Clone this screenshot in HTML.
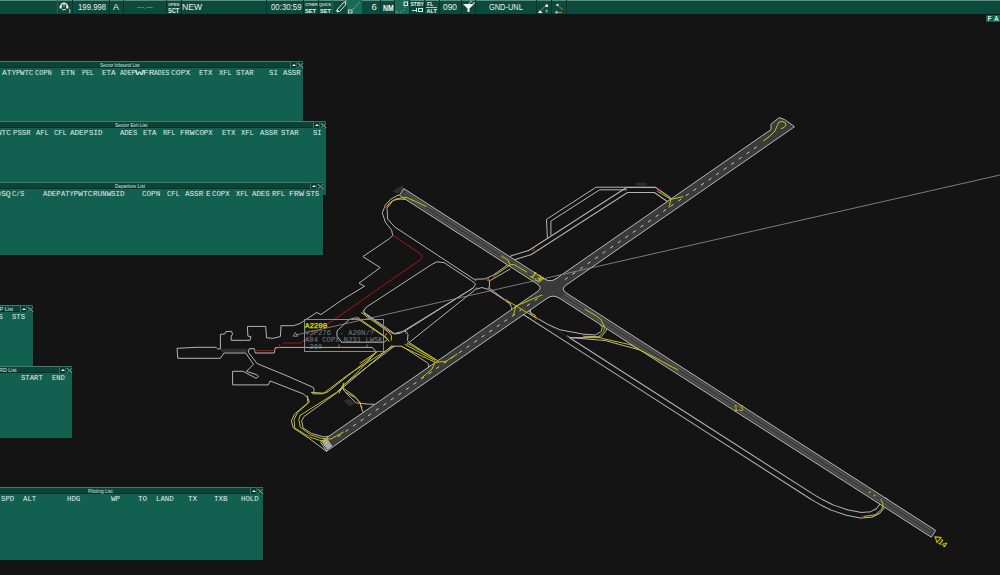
<!DOCTYPE html>
<html><head><meta charset="utf-8">
<style>
*{margin:0;padding:0;box-sizing:border-box}
html,body{width:1000px;height:575px;overflow:hidden;background:#141414;font-family:"Liberation Sans",sans-serif}
#top{position:absolute;left:0;top:0;width:1000px;height:14px;background:#0c4a3b;border-top:1px solid #628a7e;z-index:10}
.sep{position:absolute;top:-1px;width:1px;height:14px;background:#07342a}
.tb{position:absolute;color:#e8f0ee;font-size:10px;line-height:10px;white-space:pre}
.pan{position:absolute;background:#12604f}
.ttl{position:absolute;left:0;top:0;right:0;height:7px;background:#0a4437;border-top:1px solid #4a7a6d;border-bottom:1px solid #062e24}
.ttx{position:absolute;top:1px;font-size:5.5px;line-height:6px;color:#d8e4e0;white-space:pre}
.bup{position:absolute;top:0;width:6px;height:7px;border-left:1px solid #3d6e60;border-top:1px solid #3d6e60;background:#063b2d}
.bup:after{content:"";position:absolute;left:0.6px;top:1.5px;border-left:2.6px solid transparent;border-right:2.6px solid transparent;border-bottom:2.8px solid #f4f4f4}
.bx{position:absolute;top:0;width:7px;height:7px;border-left:1px solid #2e5e50;border-top:1px solid #3d6e60;background:#063b2d}
.bx:before,.bx:after{content:"";position:absolute;left:-0.5px;top:2.5px;width:7px;height:1px;background:#80a89c;transform:rotate(42deg)}
.bx:after{transform:rotate(-42deg);background:#5e8a7e}
.h{position:absolute;font-family:"Liberation Mono",monospace;font-size:7px;line-height:7px;color:#e4ece8;white-space:pre;transform-origin:0 0}
#map{position:absolute;left:0;top:0}
.lbl{font-family:"Liberation Mono",monospace;font-size:7px}
</style></head><body>
<svg id="map" width="1000" height="575" viewBox="0 0 1000 575">
<path d="M392.4,191 L401.8,185.5 L404.2,188.6 L397.1,194.1Z" fill="#2e2e2e"/>
<rect x="221.3" y="348.7" width="26.1" height="3.5" fill="#2e2e2e"/>
<path d="M636,182.8 L646.5,182.8 L646.5,185.6 L636,185.6Z" fill="#2e2e2e"/>
<path d="M343.4,400.7 L349,398.8 L355.2,403.5 L349.7,406.3Z" fill="#2e2e2e"/>
<path d="M398.7,194.9 L391.0,199.0 L385.4,205.0 L382.3,212.9 L385.4,222.3 L391.6,230.1 L392.7,235.5 L389.5,238.6 L362.9,256.6 L380.2,267.6 L359.0,283.2 L364.5,286.3 L341.8,300.0 L320.9,314.6 L316.7,312.5 L300.0,323.5 L293.5,325.7 L281.0,325.7 L280.4,336.5 L273.5,338.3 L266.5,337.9 L265.7,326.4 L247.4,326.4 L247.9,336.2 L250.9,336.5 L250.0,340.3 L231.2,340.3 L231.2,335.7 L232.6,334.8 L231.7,331.3 L225.7,331.7 L224.8,333.9 L220.4,334.4 L220.4,349.0 L217.8,349.0 L216.1,347.3 L197.0,347.3 L177.0,348.3 L177.8,358.3 L220.4,358.3 L223.9,353.0 L245.7,353.0 L253.5,364.3 L246.5,371.3 L257.0,374.8 L258.7,376.5 L256.1,378.3 L243.0,371.3 L232.6,371.3 L232.6,384.9 L268.3,384.9 L270.0,380.9 L303.1,393.8 L307.3,397.3 L308.0,402.8 L294.7,413.9 L291.3,420.9 L293.3,427.9 L310.0,439.0 L326.7,451.5" fill="none" stroke="#b4b4b4" stroke-width="1.0" stroke-linejoin="round" stroke-linecap="round" />
<path d="M249.1,349.0 L248.3,352.2 L257.0,363.5 L285.0,375.0 L313.5,387.5 L314.2,390.3 L312.8,393.8 L322.6,393.8 L328.1,391.7 L373.5,355.2 L376.1,351.8 L372.4,347.4 L282.0,347.4 L275.2,347.8 L274.3,353.0 L255.2,353.0 L254.3,348.7 L249.5,348.8" fill="none" stroke="#b4b4b4" stroke-width="1.0" stroke-linejoin="round" stroke-linecap="round" />
<path d="M254.5,350.6 L274.0,350.6" fill="none" stroke="#b01010" stroke-width="1.0" stroke-linejoin="round" stroke-linecap="round" />
<path d="M279.6,344.3 L279.6,347.3" fill="none" stroke="#b01010" stroke-width="1.0" stroke-linejoin="round" stroke-linecap="round" />
<path d="M283.9,343 L300.3,343 L419.2,260.6 Q423.5,257.5 421.5,254.5 L393.2,235.6" fill="none" stroke="#b01010" stroke-width="1.0" stroke-linejoin="round" stroke-linecap="round" />
<path d="M407.3,199.6 L400.0,199.0 L393.2,200.3 L387.0,208.2 L387.7,219.1 L394.8,227.0 L474.1,279.3 L485.0,278.9 L492.9,275.3 L507.0,265.2" fill="none" stroke="#b4b4b4" stroke-width="1.0" stroke-linejoin="round" stroke-linecap="round" />
<path d="M363.9,310.5 L366.5,307.0 L431.8,264.4 L437.0,261.8 L444.0,262.6 L471.7,280.8 L475.6,284.0 L473.3,287.9 L405.7,329.6 L400.5,333.1 L395.2,334.0 L391.8,333.1 L363.9,313.1 L363.9,310.5" fill="none" stroke="#b4b4b4" stroke-width="1.0" stroke-linejoin="round" stroke-linecap="round" />
<path d="M341.8,342.2 L384.0,342.2 L387.4,339.6 L384.8,337.0 L361.3,321.3 L355.3,317.8 L349.2,319.6 L337.0,330.9 L337.0,336.1 L341.8,342.2" fill="none" stroke="#b4b4b4" stroke-width="1.0" stroke-linejoin="round" stroke-linecap="round" />
<path d="M363.1,311.7 L394.4,333.5 L404.9,331.0 L408.0,334.2 L407.5,340.4 L409.1,342.5 L435.2,359.2" fill="none" stroke="#b4b4b4" stroke-width="1.0" stroke-linejoin="round" stroke-linecap="round" />
<path d="M404.9,331.0 L473.3,287.9" fill="none" stroke="#b4b4b4" stroke-width="1.0" stroke-linejoin="round" stroke-linecap="round" />
<path d="M409.1,342.5 L475.6,289.4 L481.9,287.5 L488.2,289.4 L504.4,299.9 L509.5,303.5 L511.8,307.5 L511.0,311.5 L509.0,315.0" fill="none" stroke="#b4b4b4" stroke-width="1.0" stroke-linejoin="round" stroke-linecap="round" />
<path d="M489.0,280.0 L489.7,284.0 L489.0,287.9 L510.9,304.4" fill="none" stroke="#b4b4b4" stroke-width="1.0" stroke-linejoin="round" stroke-linecap="round" />
<path d="M489.7,280.8 L510.0,269.1" fill="none" stroke="#b4b4b4" stroke-width="1.0" stroke-linejoin="round" stroke-linecap="round" />
<path d="M391.3,346.2 L401.8,346.2 L405.9,348.8 L426.8,362.4 L428.9,364.4 L428.4,367.6" fill="none" stroke="#b4b4b4" stroke-width="1.0" stroke-linejoin="round" stroke-linecap="round" />
<path d="M391.3,346.2 L336.5,393.1 L303.8,416.7 L301.7,420.9 L303.1,427.9 L311.4,433.4 L323.9,436.9 L329.5,436.2" fill="none" stroke="#b4b4b4" stroke-width="1.0" stroke-linejoin="round" stroke-linecap="round" />
<path d="M339.2,393.1 L343.4,384.7 L342.7,388.2 L344.8,391.7 L355.9,398.0 L360.1,402.8 L361.5,408.4 L362.9,411.9" fill="none" stroke="#b4b4b4" stroke-width="1.0" stroke-linejoin="round" stroke-linecap="round" />
<path d="M342.0,386.0 L394.4,346.2" fill="none" stroke="#b4b4b4" stroke-width="1.0" stroke-linejoin="round" stroke-linecap="round" />
<path d="M346.2,393.1 L355.9,402.8 L368.5,404.2 L374.0,404.2" fill="none" stroke="#b4b4b4" stroke-width="1.0" stroke-linejoin="round" stroke-linecap="round" />
<path d="M570.0,337.6 L605.0,340.5 L640.0,350.0 L700.0,384.0" fill="none" stroke="#b4b4b4" stroke-width="1.0" stroke-linejoin="round" stroke-linecap="round" />
<path d="M522.0,310.4 L560.0,334.8 L700.0,424.8 L812.0,496.7 L822.0,502.5 L832.0,507.5 L848.0,512.8 L861.0,515.2 L871.0,514.6 L878.0,511.0 L882.0,506.0 L884.5,500.5" fill="none" stroke="#b4b4b4" stroke-width="6.5" stroke-linejoin="round" stroke-linecap="round" />
<path d="M512.0,258.0 L530.0,252.5 L627.0,190.0 L655.0,190.0 L668.0,199.0" fill="none" stroke="#b4b4b4" stroke-width="5.8" stroke-linejoin="round" stroke-linecap="round" />
<path d="M522.0,310.4 L560.0,334.8 L700.0,424.8 L812.0,496.7 L822.0,502.5 L832.0,507.5 L848.0,512.8 L861.0,515.2 L871.0,514.6 L878.0,511.0 L882.0,506.0 L884.5,500.5" fill="none" stroke="#141414" stroke-width="4.5" stroke-linejoin="round" stroke-linecap="round" />
<path d="M512.0,258.0 L530.0,252.5 L627.0,190.0 L655.0,190.0 L668.0,199.0" fill="none" stroke="#141414" stroke-width="3.8" stroke-linejoin="round" stroke-linecap="round" />
<path d="M537.0,316.1 L569.0,336.7" fill="none" stroke="#141414" stroke-width="2.4" stroke-linejoin="round" stroke-linecap="round" />
<path d="M547.4,237.6 L546.5,219.3 L596.1,187.2 L655.2,187.2" fill="none" stroke="#b4b4b4" stroke-width="1.0" stroke-linejoin="round" stroke-linecap="round" />
<path d="M550.9,235.0 L550.9,221.1 L599.6,189.8 L626.5,189.8" fill="none" stroke="#b4b4b4" stroke-width="1.0" stroke-linejoin="round" stroke-linecap="round" />
<path d="M536.5,317.9 L548.0,324.5 L560.0,329.8 L583.0,334.1 L595.2,335.0 L601.3,331.5 L602.2,327.2 L600.4,324.6" fill="none" stroke="#b4b4b4" stroke-width="1.0" stroke-linejoin="round" stroke-linecap="round" />
<path d="M567.4,335.9 L570.0,337.6 L600.4,337.6 L605.7,331.5 L606.5,328.9 L607.4,328.0" fill="none" stroke="#b4b4b4" stroke-width="1.0" stroke-linejoin="round" stroke-linecap="round" />
<path d="M399.4,195.4 L931.3,537.2 L935.7,530.4 L403.8,188.6Z" fill="#3e3e3e" stroke="#b8b8b8" stroke-width="1"/>
<path d="M403.7,195.4 L929.6,533.2" fill="none" stroke="#606060" stroke-width="0.9" stroke-linejoin="round" stroke-linecap="round" />
<path d="M405.5,192.6 L931.4,530.4" fill="none" stroke="#606060" stroke-width="0.9" stroke-linejoin="round" stroke-linecap="round" />
<path d="M326.7,451.1 L794.5,126.7 L784.5,119.5 L779.2,117.6 L771,124.2 L771,129.6 L320.5,442.1Z" fill="#3a3a3a" stroke="#b8b8b8" stroke-width="1"/>
<line x1="337.9" y1="436.7" x2="340.8" y2="434.7" stroke="#c8c8c8" stroke-width="1"/>
<line x1="345.5" y1="431.5" x2="348.3" y2="429.5" stroke="#c8c8c8" stroke-width="1"/>
<line x1="353.0" y1="426.2" x2="355.9" y2="424.2" stroke="#c8c8c8" stroke-width="1"/>
<line x1="360.6" y1="421.0" x2="363.5" y2="419.0" stroke="#c8c8c8" stroke-width="1"/>
<line x1="368.2" y1="415.7" x2="371.0" y2="413.8" stroke="#c8c8c8" stroke-width="1"/>
<line x1="375.7" y1="410.5" x2="378.6" y2="408.5" stroke="#c8c8c8" stroke-width="1"/>
<line x1="383.3" y1="405.3" x2="386.2" y2="403.3" stroke="#c8c8c8" stroke-width="1"/>
<line x1="390.9" y1="400.0" x2="393.7" y2="398.0" stroke="#c8c8c8" stroke-width="1"/>
<line x1="398.4" y1="394.8" x2="401.3" y2="392.8" stroke="#c8c8c8" stroke-width="1"/>
<line x1="406.0" y1="389.6" x2="408.9" y2="387.6" stroke="#c8c8c8" stroke-width="1"/>
<line x1="413.5" y1="384.3" x2="416.4" y2="382.3" stroke="#c8c8c8" stroke-width="1"/>
<line x1="421.1" y1="379.1" x2="424.0" y2="377.1" stroke="#c8c8c8" stroke-width="1"/>
<line x1="428.7" y1="373.9" x2="431.6" y2="371.9" stroke="#c8c8c8" stroke-width="1"/>
<line x1="436.2" y1="368.6" x2="439.1" y2="366.6" stroke="#c8c8c8" stroke-width="1"/>
<line x1="443.8" y1="363.4" x2="446.7" y2="361.4" stroke="#c8c8c8" stroke-width="1"/>
<line x1="451.4" y1="358.1" x2="454.2" y2="356.2" stroke="#c8c8c8" stroke-width="1"/>
<line x1="458.9" y1="352.9" x2="461.8" y2="350.9" stroke="#c8c8c8" stroke-width="1"/>
<line x1="466.5" y1="347.7" x2="469.4" y2="345.7" stroke="#c8c8c8" stroke-width="1"/>
<line x1="474.1" y1="342.4" x2="476.9" y2="340.4" stroke="#c8c8c8" stroke-width="1"/>
<line x1="481.6" y1="337.2" x2="484.5" y2="335.2" stroke="#c8c8c8" stroke-width="1"/>
<line x1="489.2" y1="332.0" x2="492.1" y2="330.0" stroke="#c8c8c8" stroke-width="1"/>
<line x1="496.8" y1="326.7" x2="499.6" y2="324.7" stroke="#c8c8c8" stroke-width="1"/>
<line x1="504.3" y1="321.5" x2="507.2" y2="319.5" stroke="#c8c8c8" stroke-width="1"/>
<line x1="511.9" y1="316.3" x2="514.8" y2="314.3" stroke="#c8c8c8" stroke-width="1"/>
<line x1="519.4" y1="311.0" x2="522.3" y2="309.0" stroke="#c8c8c8" stroke-width="1"/>
<line x1="527.0" y1="305.8" x2="529.9" y2="303.8" stroke="#c8c8c8" stroke-width="1"/>
<line x1="534.6" y1="300.5" x2="537.5" y2="298.6" stroke="#c8c8c8" stroke-width="1"/>
<line x1="542.1" y1="295.3" x2="545.0" y2="293.3" stroke="#c8c8c8" stroke-width="1"/>
<line x1="549.7" y1="290.1" x2="552.6" y2="288.1" stroke="#c8c8c8" stroke-width="1"/>
<line x1="557.3" y1="284.8" x2="560.1" y2="282.8" stroke="#c8c8c8" stroke-width="1"/>
<line x1="564.8" y1="279.6" x2="567.7" y2="277.6" stroke="#c8c8c8" stroke-width="1"/>
<line x1="572.4" y1="274.4" x2="575.3" y2="272.4" stroke="#c8c8c8" stroke-width="1"/>
<line x1="580.0" y1="269.1" x2="582.8" y2="267.1" stroke="#c8c8c8" stroke-width="1"/>
<line x1="587.5" y1="263.9" x2="590.4" y2="261.9" stroke="#c8c8c8" stroke-width="1"/>
<line x1="595.1" y1="258.7" x2="598.0" y2="256.7" stroke="#c8c8c8" stroke-width="1"/>
<line x1="602.7" y1="253.4" x2="605.5" y2="251.4" stroke="#c8c8c8" stroke-width="1"/>
<line x1="610.2" y1="248.2" x2="613.1" y2="246.2" stroke="#c8c8c8" stroke-width="1"/>
<line x1="617.8" y1="242.9" x2="620.7" y2="240.9" stroke="#c8c8c8" stroke-width="1"/>
<line x1="625.3" y1="237.7" x2="628.2" y2="235.7" stroke="#c8c8c8" stroke-width="1"/>
<line x1="632.9" y1="232.5" x2="635.8" y2="230.5" stroke="#c8c8c8" stroke-width="1"/>
<line x1="640.5" y1="227.2" x2="643.4" y2="225.2" stroke="#c8c8c8" stroke-width="1"/>
<line x1="648.0" y1="222.0" x2="650.9" y2="220.0" stroke="#c8c8c8" stroke-width="1"/>
<line x1="655.6" y1="216.8" x2="658.5" y2="214.8" stroke="#c8c8c8" stroke-width="1"/>
<line x1="663.2" y1="211.5" x2="666.0" y2="209.5" stroke="#c8c8c8" stroke-width="1"/>
<line x1="670.7" y1="206.3" x2="673.6" y2="204.3" stroke="#c8c8c8" stroke-width="1"/>
<line x1="678.3" y1="201.0" x2="681.2" y2="199.1" stroke="#c8c8c8" stroke-width="1"/>
<line x1="685.9" y1="195.8" x2="688.7" y2="193.8" stroke="#c8c8c8" stroke-width="1"/>
<line x1="693.4" y1="190.6" x2="696.3" y2="188.6" stroke="#c8c8c8" stroke-width="1"/>
<line x1="701.0" y1="185.3" x2="703.9" y2="183.3" stroke="#c8c8c8" stroke-width="1"/>
<line x1="708.6" y1="180.1" x2="711.4" y2="178.1" stroke="#c8c8c8" stroke-width="1"/>
<line x1="716.1" y1="174.9" x2="719.0" y2="172.9" stroke="#c8c8c8" stroke-width="1"/>
<line x1="723.7" y1="169.6" x2="726.6" y2="167.6" stroke="#c8c8c8" stroke-width="1"/>
<line x1="731.2" y1="164.4" x2="734.1" y2="162.4" stroke="#c8c8c8" stroke-width="1"/>
<line x1="738.8" y1="159.2" x2="741.7" y2="157.2" stroke="#c8c8c8" stroke-width="1"/>
<line x1="746.4" y1="153.9" x2="749.3" y2="151.9" stroke="#c8c8c8" stroke-width="1"/>
<line x1="753.9" y1="148.7" x2="756.8" y2="146.7" stroke="#c8c8c8" stroke-width="1"/>
<path d="M322.0,442.1 L327.1,438.5 L332.4,446.1 L327.2,449.7Z" fill="#b8b8b8"/>
<line x1="323.3" y1="444.0" x2="328.5" y2="440.4" stroke="#7a7a7a" stroke-width="0.7"/>
<line x1="324.6" y1="445.9" x2="329.8" y2="442.3" stroke="#7a7a7a" stroke-width="0.7"/>
<line x1="325.9" y1="447.8" x2="331.1" y2="444.2" stroke="#7a7a7a" stroke-width="0.7"/>
<path d="M530.4,309.5 Q529.6,315.6 536.5,317.9" fill="none" stroke="#b4b4b4" stroke-width="1"/>
<path d="M386.2,207.4 L390.0,202.5 L396.0,199.0 L405.7,197.2 L415.1,201.1 L426.1,206.6" fill="none" stroke="#c8c400" stroke-width="1.0" stroke-linejoin="round" stroke-linecap="round" />
<path d="M361.3,312.6 L389.2,332.6 L391.5,336.0 L391.2,340.4" fill="none" stroke="#c8c400" stroke-width="1.0" stroke-linejoin="round" stroke-linecap="round" />
<path d="M357.0,317.0 L386.5,337.5 L389.0,341.5" fill="none" stroke="#c8c400" stroke-width="1.0" stroke-linejoin="round" stroke-linecap="round" />
<path d="M311.4,392.4 L323.9,393.1 L347.6,375.0 L392.4,346.7" fill="none" stroke="#c8c400" stroke-width="1.0" stroke-linejoin="round" stroke-linecap="round" />
<path d="M300.3,415.3 L336.5,392.4 L360.0,369.7 L376.7,351.9" fill="none" stroke="#c8c400" stroke-width="1.0" stroke-linejoin="round" stroke-linecap="round" />
<path d="M360.0,363.4 L376.7,351.9" fill="none" stroke="#c8c400" stroke-width="1.0" stroke-linejoin="round" stroke-linecap="round" />
<path d="M307.3,395.9 L309.3,402.1 L297.5,412.6 L294.0,419.5 L294.7,427.9 L309.3,436.9 L319.8,440.4 L326.7,441.1" fill="none" stroke="#c8c400" stroke-width="1.0" stroke-linejoin="round" stroke-linecap="round" />
<path d="M300.3,415.3 L298.9,419.5 L300.3,427.2 L310.7,434.8 L321.2,438.3 L330.9,439.0 L343.4,432.0" fill="none" stroke="#c8c400" stroke-width="1.0" stroke-linejoin="round" stroke-linecap="round" />
<path d="M343.4,383.3 L343.0,388.0 L355.0,396.5 L359.5,402.0 L362.0,408.0" fill="none" stroke="#c8c400" stroke-width="1.0" stroke-linejoin="round" stroke-linecap="round" />
<path d="M401.8,346.7 L433.1,361.3" fill="none" stroke="#c8c400" stroke-width="1.0" stroke-linejoin="round" stroke-linecap="round" />
<path d="M405.0,344.5 L435.0,360.5" fill="none" stroke="#c8c400" stroke-width="1.0" stroke-linejoin="round" stroke-linecap="round" />
<path d="M407.0,343.0 L437.2,360.3" fill="none" stroke="#c8c400" stroke-width="1.0" stroke-linejoin="round" stroke-linecap="round" />
<path d="M433.1,361.3 L435.2,362.4 L432.0,369.0 L421.6,378.0" fill="none" stroke="#c8c400" stroke-width="1.0" stroke-linejoin="round" stroke-linecap="round" />
<path d="M435.2,362.4 L446.0,361.3 L457.1,354.0" fill="none" stroke="#c8c400" stroke-width="1.0" stroke-linejoin="round" stroke-linecap="round" />
<path d="M494.0,275.9 L510.2,264.9" fill="none" stroke="#c8c400" stroke-width="1.0" stroke-linejoin="round" stroke-linecap="round" />
<path d="M501.3,256.0 L508.0,260.0 L510.2,264.9 L513.8,264.4 L526.9,272.2" fill="none" stroke="#c8c400" stroke-width="1.0" stroke-linejoin="round" stroke-linecap="round" />
<path d="M505.6,299.7 L516.1,306.0 L536.9,318.5" fill="none" stroke="#c8c400" stroke-width="1.0" stroke-linejoin="round" stroke-linecap="round" />
<path d="M516.1,306.0 L514.5,311.0 L513.5,315.0" fill="none" stroke="#c8c400" stroke-width="1.0" stroke-linejoin="round" stroke-linecap="round" />
<path d="M515.0,306.5 L544.2,294.0" fill="none" stroke="#c8c400" stroke-width="1.0" stroke-linejoin="round" stroke-linecap="round" />
<path d="M584.8,309.3 L597.0,316.5 L601.3,320.2 L604.3,326.3 L603.9,331.5 L598.7,336.7 L583.9,336.3" fill="none" stroke="#c8c400" stroke-width="1.0" stroke-linejoin="round" stroke-linecap="round" />
<path d="M598.7,336.7 L602.2,338.5 L630.0,344.6 L677.8,369.8" fill="none" stroke="#c8c400" stroke-width="1.0" stroke-linejoin="round" stroke-linecap="round" />
<path d="M657.8,191.5 L670.9,199.3 L683.0,196.7" fill="none" stroke="#c8c400" stroke-width="1.0" stroke-linejoin="round" stroke-linecap="round" />
<path d="M670.9,199.3 L669.1,207.2" fill="none" stroke="#c8c400" stroke-width="1.0" stroke-linejoin="round" stroke-linecap="round" />
<path d="M880.8,499.6 L883.2,503.6 L881.6,509.2 L875.2,514.8 L864.0,516.4" fill="none" stroke="#c8c400" stroke-width="1.0" stroke-linejoin="round" stroke-linecap="round" />
<path d="M869.3,492.2 L869.9,492.6" fill="none" stroke="#c8c400" stroke-width="1.3" stroke-linejoin="round" stroke-linecap="round" />
<path d="M874.1,495.4 L874.7,495.8" fill="none" stroke="#c8c400" stroke-width="1.3" stroke-linejoin="round" stroke-linecap="round" />
<path d="M763.5,140.8 L770.0,136.0 L775.0,131.0 L777.0,126.0 L779.0,122.0 L782.0,121.5 L785.0,122.5 L786.0,125.0 L784.0,127.5 L781.5,128.5" fill="none" stroke="#c8c400" stroke-width="1.0" stroke-linejoin="round" stroke-linecap="round" />
<line x1="474.8" y1="280.9" x2="477.2" y2="279.1" stroke="#c05818" stroke-width="1.2"/>
<line x1="474.8" y1="289.4" x2="477.2" y2="287.6" stroke="#c05818" stroke-width="1.2"/>
<line x1="486.8" y1="280.4" x2="489.2" y2="278.6" stroke="#c05818" stroke-width="1.2"/>
<line x1="486.8" y1="289.4" x2="489.2" y2="287.6" stroke="#c05818" stroke-width="1.2"/>
<line x1="422.5" y1="357.5" x2="424.9" y2="355.7" stroke="#c05818" stroke-width="1.2"/>
<line x1="405.8" y1="346.0" x2="408.2" y2="344.2" stroke="#c05818" stroke-width="1.2"/>
<line x1="405.1" y1="333.6" x2="407.5" y2="331.8" stroke="#c05818" stroke-width="1.2"/>
<line x1="384.8" y1="335.4" x2="387.2" y2="333.6" stroke="#c05818" stroke-width="1.2"/>
<line x1="392.5" y1="236.0" x2="394.5" y2="236.0" stroke="#b01010" stroke-width="1.2"/>
<line x1="492.8" y1="277.3" x2="495.2" y2="275.5" stroke="#c02818" stroke-width="1.2"/>
<line x1="504.8" y1="300.9" x2="507.2" y2="299.1" stroke="#c02818" stroke-width="1.2"/>
<line x1="535.2" y1="319.9" x2="537.6" y2="318.1" stroke="#c02818" stroke-width="1.2"/>
<line x1="308.1" y1="437.1" x2="310.5" y2="435.3" stroke="#c02818" stroke-width="1.2"/>
<line x1="356.1" y1="403.0" x2="358.5" y2="401.2" stroke="#c02818" stroke-width="1.2"/>
<line x1="656.6" y1="191.6" x2="659.0" y2="189.8" stroke="#c02818" stroke-width="1.2"/>
<line x1="532.3" y1="250.7" x2="534.7" y2="248.9" stroke="#c02818" stroke-width="1.2"/>
<line x1="339.0" y1="344.4" x2="339.0" y2="346.9" stroke="#c05818" stroke-width="1.2"/>
<line x1="367.0" y1="344.4" x2="367.0" y2="346.9" stroke="#c05818" stroke-width="1.2"/>
<line x1="384.9" y1="206.4" x2="387.1" y2="207.6" stroke="#b01010" stroke-width="1.2"/>
<line x1="862.2" y1="515.1" x2="862.6" y2="517.3" stroke="#b01010" stroke-width="1.2"/>
<line x1="583.3" y1="334.7" x2="583.7" y2="336.9" stroke="#c02818" stroke-width="1.2"/>
<path d="M297.0,334.7 L1000.0,175.0" fill="none" stroke="#949494" stroke-width="0.8" stroke-linejoin="round" stroke-linecap="round" />
<rect x="304.5" y="319.5" width="79" height="32" fill="none" stroke="#8a8a8a" stroke-width="1"/>
<path d="M293.2,336.2 L295.4,332.6 L297.6,336.2Z" fill="none" stroke="#a8a8a8" stroke-width="0.8"/>
<text x="305" y="327.8" font-family="Liberation Mono" font-size="7.4" fill="#e0e000" stroke="#e0e000" stroke-width="0.25">A2200</text>
<text x="305" y="334.5" font-family="Liberation Mono" font-size="7.2" fill="#6e7e8c" xml:space="preserve">VJP276  - A20N/?</text>
<text x="305" y="341.9" font-family="Liberation Mono" font-size="7.2" fill="#6e7e8c" xml:space="preserve">A04 COPX N231 LWSK</text>
<text x="305" y="348.8" font-family="Liberation Mono" font-size="7.2" fill="#6e7e8c" xml:space="preserve"> 360</text>
<text x="733.5" y="411" font-family="Liberation Sans" font-size="8.2" letter-spacing="0.8" fill="#c8c000">13</text>
<g transform="translate(539.6,279) rotate(36)"><text x="-10" y="3.6" font-family="Liberation Sans" font-size="10" fill="#d4d000">13</text><path d="M1.8,-3.2 L8.5,0.2 L1.8,3.4Z" fill="none" stroke="#d4d000" stroke-width="1.1"/></g>
<g transform="translate(941,541.5) rotate(38)"><path d="M-7.5,0 L-2.5,-3.2 L-2.5,3.2Z" fill="none" stroke="#c8c400" stroke-width="1.1"/><text x="-2" y="3" font-family="Liberation Sans" font-size="8" font-weight="bold" fill="#c8c400">14</text></g>
<path d="M558.93,297.97 Q553.04,294.19 547.29,298.18 L537.27,291.74 Q543.02,287.75 537.13,283.97 L544.42,278.91 Q550.31,282.69 556.07,278.70 L566.09,285.14 Q560.33,289.13 566.22,292.91Z" fill="#3a3a3a" stroke="none"/>
<path d="M558.93,297.97 Q553.04,294.19 547.29,298.18" fill="none" stroke="#b8b8b8" stroke-width="1"/>
<path d="M537.13,283.97 Q543.02,287.75 537.27,291.74" fill="none" stroke="#b8b8b8" stroke-width="1"/>
<path d="M544.42,278.91 Q550.31,282.69 556.07,278.70" fill="none" stroke="#b8b8b8" stroke-width="1"/>
<path d="M566.22,292.91 Q560.33,289.13 566.09,285.14" fill="none" stroke="#b8b8b8" stroke-width="1"/>
</svg>
<div class="pan" style="left:0px;top:121px;width:326px;height:74px;z-index:2"><div class="ttl"></div><div class="ttx" style="left:115.10px;transform:scaleX(0.883);transform-origin:0 0">Sector Exit List</div><div class="bup" style="left:313px"></div><div class="bx" style="left:319px"></div><div class="h" style="left:-3.40px;top:8.5px;transform:scale(1.094,1.08)">WTC</div><div class="h" style="left:13.40px;top:8.5px;transform:scale(1.047,1.08)">PSSR</div><div class="h" style="left:35.60px;top:8.5px;transform:scale(1.015,1.08)">AFL</div><div class="h" style="left:54.20px;top:8.5px;transform:scale(1.015,1.08)">CFL</div><div class="h" style="left:70.40px;top:8.5px;transform:scale(1.083,1.08)">ADEP</div><div class="h" style="left:89.00px;top:8.5px;transform:scale(1.063,1.08)">SID</div><div class="h" style="left:120.20px;top:8.5px;transform:scale(1.023,1.08)">ADES</div><div class="h" style="left:142.60px;top:8.5px;transform:scale(1.063,1.08)">ETA</div><div class="h" style="left:163.00px;top:8.5px;transform:scale(0.968,1.08)">RFL</div><div class="h" style="left:179.80px;top:8.5px;transform:scale(1.158,1.08)">FRW</div><div class="h" style="left:194.80px;top:8.5px;transform:scale(1.047,1.08)">COPX</div><div class="h" style="left:221.60px;top:8.5px;transform:scale(1.063,1.08)">ETX</div><div class="h" style="left:241.40px;top:8.5px;transform:scale(1.015,1.08)">XFL</div><div class="h" style="left:260.00px;top:8.5px;transform:scale(1.047,1.08)">ASSR</div><div class="h" style="left:281.00px;top:8.5px;transform:scale(1.047,1.08)">STAR</div><div class="h" style="left:313.40px;top:8.5px;transform:scale(1.023,1.08)">SI</div></div>
<div class="pan" style="left:0px;top:61px;width:303px;height:60px;z-index:3"><div class="ttl"></div><div class="ttx" style="left:100.20px;transform:scaleX(0.835);transform-origin:0 0">Sector Inbound List</div><div class="bup" style="left:290px"></div><div class="bx" style="left:296px"></div><div class="h" style="left:1.60px;top:8.5px;transform:scale(1.118,1.08)">ATYP</div><div class="h" style="left:20.10px;top:8.5px;transform:scale(1.055,1.08)">WTC</div><div class="h" style="left:34.60px;top:8.5px;transform:scale(0.999,1.08)">COPN</div><div class="h" style="left:60.60px;top:8.5px;transform:scale(1.094,1.08)">ETN</div><div class="h" style="left:81.60px;top:8.5px;transform:scale(0.936,1.08)">PEL</div><div class="h" style="left:101.60px;top:8.5px;transform:scale(1.079,1.08)">ETA</div><div class="h" style="left:119.60px;top:8.5px;transform:scale(0.916,1.08)">ADEP</div><div class="h" style="left:134.60px;top:8.5px;transform:scale(2.094,1.08)">W</div><div class="h" style="left:143.10px;top:8.5px;transform:scale(1.344,1.08)">FR</div><div class="h" style="left:154.10px;top:8.5px;transform:scale(0.910,1.08)">ADES</div><div class="h" style="left:170.60px;top:8.5px;transform:scale(1.148,1.08)">COPX</div><div class="h" style="left:199.20px;top:8.5px;transform:scale(1.063,1.08)">ETX</div><div class="h" style="left:219.00px;top:8.5px;transform:scale(1.015,1.08)">XFL</div><div class="h" style="left:235.80px;top:8.5px;transform:scale(1.047,1.08)">STAR</div><div class="h" style="left:268.60px;top:8.5px;transform:scale(1.047,1.08)">SI</div><div class="h" style="left:282.60px;top:8.5px;transform:scale(1.047,1.08)">ASSR</div></div>
<div class="pan" style="left:0px;top:182px;width:323px;height:73px;z-index:4"><div class="ttl"></div><div class="ttx" style="left:114.70px;transform:scaleX(0.868);transform-origin:0 0">Departure List</div><div class="bup" style="left:310px"></div><div class="bx" style="left:316px"></div><div class="h" style="left:-4.40px;top:8.5px;transform:scale(1.174,1.08)">0SQ</div><div class="h" style="left:12.20px;top:8.5px;transform:scale(0.968,1.08)">C/S</div><div class="h" style="left:42.80px;top:8.5px;transform:scale(1.047,1.08)">ADEP</div><div class="h" style="left:61.40px;top:8.5px;transform:scale(1.011,1.08)">ATYP</div><div class="h" style="left:78.10px;top:8.5px;transform:scale(1.166,1.08)">WTC</div><div class="h" style="left:93.20px;top:8.5px;transform:scale(1.083,1.08)">RUNW</div><div class="h" style="left:111.40px;top:8.5px;transform:scale(1.079,1.08)">SID</div><div class="h" style="left:142.20px;top:8.5px;transform:scale(1.083,1.08)">COPN</div><div class="h" style="left:166.80px;top:8.5px;transform:scale(1.015,1.08)">CFL</div><div class="h" style="left:185.40px;top:8.5px;transform:scale(1.083,1.08)">ASSR</div><div class="h" style="left:206.10px;top:8.5px;transform:scale(1.118,1.08)">E</div><div class="h" style="left:212.00px;top:8.5px;transform:scale(1.053,1.08)">COPX</div><div class="h" style="left:236.00px;top:8.5px;transform:scale(0.991,1.08)">XFL</div><div class="h" style="left:252.30px;top:8.5px;transform:scale(1.053,1.08)">ADES</div><div class="h" style="left:272.40px;top:8.5px;transform:scale(1.047,1.08)">RFL</div><div class="h" style="left:289.30px;top:8.5px;transform:scale(1.198,1.08)">FRW</div><div class="h" style="left:306.20px;top:8.5px;transform:scale(1.047,1.08)">STS</div></div>
<div class="pan" style="left:0px;top:305px;width:33px;height:61px;z-index:5"><div class="ttl"></div><div class="ttx" style="left:-3.80px;transform:scaleX(0.987);transform-origin:0 0">EP List</div><div class="bup" style="left:20px"></div><div class="bx" style="left:26px"></div><div class="h" style="left:-2.40px;top:8.5px;transform:scale(1.142,1.08)">S</div><div class="h" style="left:12.00px;top:8.5px;transform:scale(1.031,1.08)">STS</div></div>
<div class="pan" style="left:0px;top:366px;width:72px;height:72px;z-index:6"><div class="ttl"></div><div class="ttx" style="left:-0.80px;transform:scaleX(0.976);transform-origin:0 0">RD List</div><div class="bup" style="left:59px"></div><div class="bx" style="left:65px"></div><div class="h" style="left:20.60px;top:8.5px;transform:scale(1.037,1.08)">START</div><div class="h" style="left:52.10px;top:8.5px;transform:scale(1.015,1.08)">END</div></div>
<div class="pan" style="left:0px;top:487px;width:263px;height:73px;z-index:7"><div class="ttl"></div><div class="ttx" style="left:87.50px;transform:scaleX(0.874);transform-origin:0 0">Piloting List</div><div class="bup" style="left:250px"></div><div class="bx" style="left:256px"></div><div class="h" style="left:0.90px;top:8.5px;transform:scale(1.047,1.08)">SPD</div><div class="h" style="left:23.00px;top:8.5px;transform:scale(1.047,1.08)">ALT</div><div class="h" style="left:67.20px;top:8.5px;transform:scale(1.047,1.08)">HDG</div><div class="h" style="left:110.80px;top:8.5px;transform:scale(1.094,1.08)">WP</div><div class="h" style="left:137.90px;top:8.5px;transform:scale(1.094,1.08)">TO</div><div class="h" style="left:156.10px;top:8.5px;transform:scale(1.047,1.08)">LAND</div><div class="h" style="left:187.60px;top:8.5px;transform:scale(1.094,1.08)">TX</div><div class="h" style="left:214.20px;top:8.5px;transform:scale(1.063,1.08)">TXB</div><div class="h" style="left:240.80px;top:8.5px;transform:scale(1.047,1.08)">HOLD</div></div>
<div id="top"><div class="sep" style="left:57px;background:#2a6656"></div>
<div class="sep" style="left:72px"></div>
<div class="sep" style="left:109px"></div>
<div class="sep" style="left:123px"></div>
<div class="sep" style="left:166px"></div>
<div class="sep" style="left:181px"></div>
<div class="sep" style="left:266px"></div>
<div class="sep" style="left:303px"></div>
<div class="sep" style="left:318px"></div>
<div class="sep" style="left:332px;background:#2a6656"></div>
<div style="position:absolute;left:347px;top:-1px;width:15px;height:14px;background:#196a58"></div>
<div class="sep" style="left:380px"></div>
<div class="sep" style="left:394px"></div>
<div style="position:absolute;left:395px;top:-1px;width:14px;height:14px;background:#196a58"></div>
<div class="sep" style="left:409px"></div>
<div class="sep" style="left:424px"></div>
<div class="sep" style="left:439px"></div>
<div class="sep" style="left:461px"></div>
<div class="sep" style="left:475px"></div>
<div class="sep" style="left:536px"></div>
<div class="sep" style="left:551px"></div>
<div class="sep" style="left:566px"></div>
<svg style="position:absolute;left:0;top:-1px" width="600" height="14" viewBox="0 0 600 14">
<!-- headset -->
<path d="M60.6,6.5 A3.5,4.3 0 0 1 67.4,6.5" fill="none" stroke="#e8eeec" stroke-width="1.2"/>
<rect x="59.6" y="5.6" width="2.2" height="3" rx="0.9" fill="#f8faf9"/>
<rect x="66.2" y="5.6" width="2.2" height="3" rx="0.9" fill="#f8faf9"/>
<path d="M63,4 L65,4 L64.4,5 L64.4,7 L63.6,7 L63.6,5Z" fill="#d8e2de"/>
<path d="M62.2,9.8 L65.8,9.4" fill="none" stroke="#dfe6e4" stroke-width="1"/>
<rect x="69.1" y="9.2" width="1.2" height="3.8" fill="#c8a898"/>
<!-- pencil -->
<path d="M336.5,10.5 L343,3 L346,1.5 L345.5,5 L339.5,11.5 Z" fill="none" stroke="#dfe8e4" stroke-width="1"/>
<path d="M336.5,10.5 L339.5,11.5 L337,12.5Z" fill="#e8eeec"/>
<!-- zoom btn -->
<rect x="348.5" y="10" width="3.5" height="3" fill="none" stroke="#cfe0da" stroke-width="0.9"/>
<path d="M353,9 L360,2" stroke="#bcd4cc" stroke-width="0.8" stroke-dasharray="1.5 1.5"/>
<rect x="404" y="2" width="3.5" height="3.5" fill="none" stroke="#e0ece8" stroke-width="1"/>
<path d="M396,12 L398,12 M400,12 L401,12 M403,11 L404,10 M405,8 L405,7" stroke="#a8c8c0" stroke-width="0.7"/>
<!-- funnel -->
<path d="M463,4 L474,4 L469.5,8.5 L469.5,12 L467.5,12 L467.5,8.5 Z" fill="#f0f2f2"/>
<path d="M469,4 Q470,1 472,1.5" fill="none" stroke="#e0e6e4" stroke-width="0.8"/>
<rect x="472.5" y="2.5" width="2.5" height="1" fill="#e0e6e4"/>
<!-- icon 1 -->
<path d="M538,13 L540,10 L542.5,13 Z" fill="#f0f0f0"/>
<path d="M540,11 L546,5.5" stroke="#d07030" stroke-width="1"/>
<rect x="545.5" y="4.5" width="2.5" height="2.5" fill="#f0f0f0"/>
<rect x="546" y="10" width="1.5" height="2" fill="none" stroke="#a0b8b0" stroke-width="0.5"/>
<!-- icon 2 -->
<circle cx="557.5" cy="5" r="1.3" fill="#c8d4d0"/>
<path d="M558.5,6 L563,10 M556.5,12.5 L562,12.5" stroke="#d07030" stroke-width="1"/>
<rect x="555.5" y="11" width="2" height="2.5" fill="#b8c4c0"/>
</svg>
<div class="tb" style="left:77.5px;top:0.6px;font-size:9.5px;transform:scaleX(0.82);transform-origin:0 0">199.998</div>
<div class="tb" style="left:113.3px;top:0.6px;font-size:9.5px;transform:scaleX(0.95);transform-origin:0 0">A</div>
<div class="tb" style="left:137px;top:1px;font-size:7px;color:#9fbcb4">---.---</div>
<div class="tb" style="left:167.5px;top:0.5px;font-size:4.2px;line-height:5px;font-weight:bold;color:#d0dcd8;transform:scaleX(0.95);transform-origin:0 0">OPEN</div>
<div class="tb" style="left:168px;top:6px;font-size:6.4px;line-height:7px;font-weight:bold;transform:scaleX(0.88);transform-origin:0 0">SCT</div>
<div class="tb" style="left:182px;top:0.6px;font-size:9.5px;transform:scaleX(0.9);transform-origin:0 0">NEW</div>
<div class="tb" style="left:270.5px;top:0.6px;font-size:9.5px;transform:scaleX(0.825);transform-origin:0 0">00:30:59</div>
<div class="tb" style="left:304.5px;top:0.5px;font-size:4.2px;line-height:5px;font-weight:bold;transform:scaleX(0.85);transform-origin:0 0;color:#d0dcd8">OTHER</div>
<div class="tb" style="left:305px;top:6px;font-size:6.2px;line-height:7px;font-weight:bold;transform:scaleX(0.92);transform-origin:0 0">SET</div>
<div class="tb" style="left:319px;top:0.5px;font-size:4.2px;line-height:5px;font-weight:bold;transform:scaleX(0.9);transform-origin:0 0;color:#d0dcd8">QUICK</div>
<div class="tb" style="left:320px;top:6px;font-size:6.2px;line-height:7px;font-weight:bold;transform:scaleX(0.92);transform-origin:0 0">SET</div>
<div class="tb" style="left:371.5px;top:0.6px;font-size:9.5px">6</div>
<div class="tb" style="left:382.8px;top:2px;font-size:8.5px;font-weight:bold;color:#f4f8f6;transform:scaleX(0.8);transform-origin:0 0">NM</div>
<div class="tb" style="left:410.5px;top:0px;font-size:5px;line-height:6px;font-weight:bold">STBY</div>
<div style="position:absolute;left:412px;top:8.5px;width:4px;height:1px;background:#d8e4e0"></div><div style="position:absolute;left:415.5px;top:7px;width:1px;height:4px;background:#d8e4e0"></div><div style="position:absolute;left:418px;top:6.5px;width:4.5px;height:4.5px;border:1px solid #d8e4e0"></div>
<div class="tb" style="left:427px;top:0px;font-size:5.5px;line-height:6px;font-weight:bold">FL</div>
<div style="position:absolute;left:426px;top:6px;width:11px;height:1px;background:#b8ccc6"></div>
<div class="tb" style="left:426.5px;top:7px;font-size:5.5px;line-height:6px;font-weight:bold">ALT</div>
<div class="tb" style="left:443px;top:0.6px;font-size:9.5px;transform:scaleX(0.88);transform-origin:0 0">090</div>
<div class="tb" style="left:489px;top:0.6px;font-size:9.5px;transform:scaleX(0.78);transform-origin:0 0">GND-UNL</div>
</div>
<div style="position:absolute;left:986px;top:15px;width:6.5px;height:7px;background:#12604f;z-index:11"></div>
<div style="position:absolute;left:993px;top:15px;width:7px;height:7px;background:#12604f;z-index:11"></div>
<div style="position:absolute;left:987.5px;top:15px;font-size:6.5px;line-height:7px;font-weight:bold;color:#e0e8e4;z-index:12">F</div>
<div style="position:absolute;left:994px;top:15px;font-size:6.5px;line-height:7px;font-weight:bold;color:#e0e8e4;z-index:12">A</div>
</body></html>
